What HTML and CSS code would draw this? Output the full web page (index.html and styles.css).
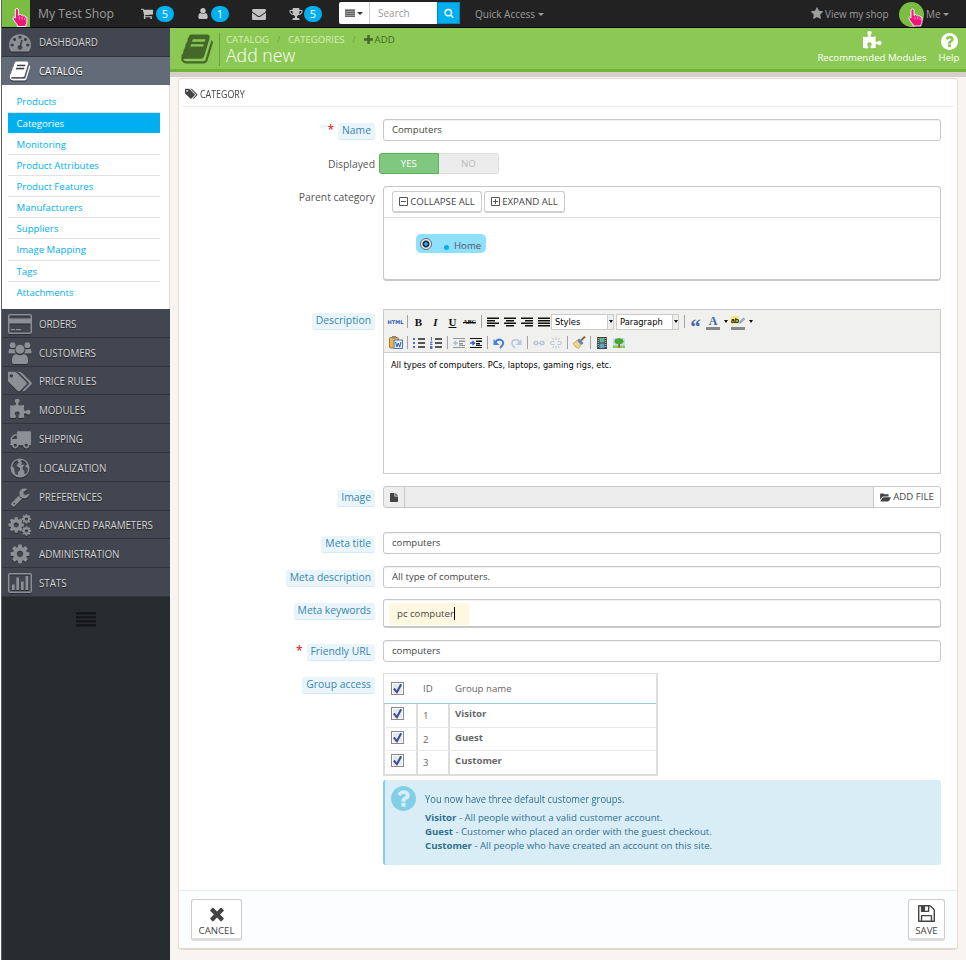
FILE: index.html
```html
<!DOCTYPE html>
<html lang="en">
<head>
<meta charset="utf-8">
<title>My Test Shop - Add new category</title>
<link rel="stylesheet" href="styles.css">
</head>
<body>
<svg class="sprite" aria-hidden="true">
  <symbol id="hand" viewBox="0 0 16 18"><path d="M4 2q0-1.500 1.500-1.500T7 2v5l1-.8q1-.4 1.600.7q1.200-.8 2 .5q1.400-.5 2 .8q1.400 0 1.400 1.600V13q0 2-1 3v1.500H6V16q-2-2-4-5.500-.8-1.500.6-2l1.400 1z" fill="#f0147c" stroke="#fff" stroke-width=".9"/><path d="M8 8v3M10.500 8v3M13 9v2.500" stroke="#ffc0dc" stroke-width=".7"/></symbol>
  <symbol id="cart" viewBox="0 0 1792 1792"><path d="M704 1536q0 52-38 90t-90 38-90-38-38-90 38-90 90-38 90 38 38 90zm896 0q0 52-38 90t-90 38-90-38-38-90 38-90 90-38 90 38 38 90zm128-1088v512q0 24-16.500 42.500t-40.500 21.500l-1044 122q13 60 13 70 0 16-24 64h920q26 0 45 19t19 45-19 45-45 19h-1024q-26 0-45-19t-19-45q0-11 8-31.500t16-36 21.500-40 15.500-29.500l-177-823h-204q-26 0-45-19t-19-45 19-45 45-19h256q16 0 28.500 6.500t19.500 15.500 13 24.500 8 26 5.500 29.500 4.500 26h1201q26 0 45 19t19 45z"/></symbol>
  <symbol id="user" viewBox="0 0 1792 1792"><path d="M1536 1399q0 109-62.500 187t-150.500 78h-854q-88 0-150.500-78t-62.500-187q0-85 8.500-160.500t31.500-152 58.500-131 94-89 134.500-34.500q131 128 313 128t313-128q76 0 134.500 34.500t94 89 58.500 131 31.500 152 8.500 160.500zm-256-887q0 159-112.500 271.500t-271.500 112.500-271.500-112.500-112.500-271.500 112.500-271.500 271.500-112.500 271.500 112.500 112.500 271.500z"/></symbol>
  <symbol id="envelope" viewBox="0 0 1792 1792"><path d="M1792 710v794q0 66-47 113t-113 47h-1472q-66 0-113-47t-47-113v-794q44 49 101 87 362 246 497 345 57 42 92.500 65.500t94.500 48 110 24.500h2q51 0 110-24.500t94.500-48 92.500-65.500q170-123 498-345 57-39 100-87zm0-294q0 79-49 151t-122 123q-376 261-468 325-10 7-42.500 30.500t-54 38-52 32.500-57.500 27-50 9h-2q-23 0-50-9t-57.500-27-52-32.500-54-38-42.500-30.500q-91-64-262-182.500t-205-142.500q-62-42-117-115.500t-55-136.500q0-78 41.500-130t118.500-52h1472q65 0 112.500 47t47.500 113z"/></symbol>
  <symbol id="trophy" viewBox="0 0 1792 1792"><path d="M522 883q-74-162-74-371h-256v96q0 78 94.500 162t235.500 113zm1078-275v-96h-256q0 209-74 371 141-29 235.500-113t94.500-162zm128-128v128q0 71-41.500 143t-112 130-173 97.500-215.500 44.500q-42 54-95 95-38 34-52.500 72.500t-14.500 89.500q0 54 30.500 91t97.500 37q75 0 133.500 45.500t58.500 114.500v64q0 14-9 23t-23 9h-832q-14 0-23-9t-9-23v-64q0-69 58.500-114.500t133.500-45.500q67 0 97.500-37t30.500-91q0-51-14.500-89.500t-52.500-72.500q-53-41-95-95-113-5-215.500-44.500t-173-97.500-112-130-41.500-143v-128q0-40 28-68t68-28h288v-96q0-66 47-113t113-47h576q66 0 113 47t47 113v96h288q40 0 68 28t28 68z"/></symbol>
  <symbol id="search" viewBox="0 0 1792 1792"><path d="M1216 832q0-185-131.500-316.500t-316.500-131.500-316.500 131.500-131.500 316.500 131.500 316.500 316.500 131.500 316.500-131.500 131.500-316.500zm512 832q0 52-38 90t-90 38q-54 0-90-38l-343-342q-179 124-399 124-143 0-273.500-55.500t-225-150-150-225-55.500-273.500 55.500-273.500 150-225 225-150 273.500-55.500 273.500 55.500 225 150 150 225 55.500 273.500q0 220-124 399l343 343q37 37 37 90z"/></symbol>
  <symbol id="star" viewBox="0 0 1792 1792"><path d="M1728 647q0 22-26 48l-363 354 86 500q1 7 1 20 0 21-10.500 35.500t-30.500 14.500q-19 0-40-12l-449-236-449 236q-22 12-40 12-21 0-31.500-14.500t-10.500-35.500q0-6 2-20l86-500-364-354q-25-27-25-48 0-37 56-46l502-73 225-455q19-41 49-41t49 41l225 455 502 73q56 9 56 46z"/></symbol>
  <symbol id="gauge" viewBox="0 0 1792 1792"><path d="M384 1152q0-53-37.500-90.500t-90.500-37.500-90.500 37.500-37.500 90.500 37.500 90.500 90.500 37.500 90.500-37.500 37.500-90.500zm192-448q0-53-37.500-90.500t-90.500-37.500-90.500 37.500-37.500 90.500 37.500 90.500 90.500 37.500 90.500-37.500 37.500-90.500zm428 481l101-382q6-26-7.500-48.500t-38.500-29.500-48 6.500-30 39.500l-101 382q-60 5-107 43.500t-63 98.500q-20 77 20 146t117 89 146-20 89-117q16-60-6-117t-72-91zm660-33q0-53-37.500-90.500t-90.500-37.500-90.500 37.500-37.500 90.500 37.500 90.500 90.500 37.500 90.500-37.500 37.500-90.500zm-640-640q0-53-37.500-90.500t-90.500-37.500-90.500 37.500-37.500 90.500 37.500 90.500 90.500 37.500 90.500-37.500 37.500-90.500zm448 192q0-53-37.500-90.500t-90.500-37.500-90.500 37.500-37.500 90.500 37.500 90.500 90.500 37.500 90.500-37.500 37.500-90.500zm320 448q0 261-141 483-19 29-54 29h-1402q-35 0-54-29-141-221-141-483 0-182 71-348t191-286 286-191 348-71 348 71 286 191 191 286 71 348z"/></symbol>
  <symbol id="book" viewBox="0 0 1792 1792"><path d="M1703 478q40 57 18 129l-275 906q-19 64-76.500 107.500t-122.500 43.500h-923q-77 0-148.500-53.500t-99.500-131.500q-24-67-2-127 0-4 3-27t4-37q1-8-3-21.500t-3-19.500q2-11 8-21t16.500-23.500 16.500-23.500q23-38 45-91.500t30-91.500q3-10 .5-30t-.5-28q3-11 17-28t17-23q21-36 42-92t25-90q1-9-2.500-32t.5-28q4-13 22-30.500t22-22.500q19-26 42.500-84.500t27.500-96.500q1-8-3-25.500t-2-26.500q2-8 9-18t18-23 17-21q8-12 16.500-30.500t15-35 16-36 19.500-32 26.500-23.500 36-11.500 47.500 5.500l-1 3q38-9 51-9h761q74 0 114 56t18 130l-274 906q-36 119-71.500 153.500t-128.500 34.500h-869q-27 0-38 15-11 16-1 43 24 70 144 70h923q29 0 56-15.500t35-41.500l300-987q7-22 5-57 38 15 59 43zm-1064 2q-4 13 2 22.500t20 9.500h608q13 0 25.500-9.500t16.500-22.500l21-64q4-13-2-22.500t-20-9.500h-608q-13 0-25.500 9.500t-16.500 22.500zm-83 256q-4 13 2 22.500t20 9.500h608q13 0 25.500-9.500t16.500-22.500l21-64q4-13-2-22.500t-20-9.500h-608q-13 0-25.500 9.500t-16.500 22.500z"/></symbol>
  <symbol id="card" viewBox="0 0 24 20"><path fill-rule="evenodd" d="M2 0h20q2 0 2 2v16q0 2-2 2H2q-2 0-2-2V2Q0 0 2 0zM1.500 2v2.500h21V2q0-.5-.5-.5H2q-.5 0-.5.500zm0 7.500V18q0 .5.500.5h20q.5 0 .5-.5V9.500zM3 15h4v1.500H3zm5 0h5v1.500H8z"/></symbol>
  <symbol id="users" viewBox="0 0 24 23"><circle cx="4.300" cy="3.300" r="3.100"/><circle cx="19.700" cy="3.300" r="3.100"/><path d="M0 12V9.500Q0 7 2.500 7q2 1 4 .3Q6 10 7.500 12zm24 0V9.500Q24 7 21.500 7q-2 1-4 .3.500 2.700-1 4.700z"/><circle cx="12" cy="7.700" r="4.700"/><path d="M3.500 20q0-7 4.500-7.500 4 2.500 8 0 4.500.5 4.500 7.500 0 3-3 3h-11q-3 0-3-3z"/></symbol>
  <symbol id="tags" viewBox="0 0 1850 1664"><path d="M384 448q0-53-37.500-90.500t-90.500-37.500-90.500 37.500-37.500 90.500 37.500 90.500 90.500 37.500 90.500-37.500 37.500-90.500zm1067 576q0 53-37 90l-491 492q-39 37-91 37-53 0-90-37l-715-716q-38-37-64.500-101t-26.500-117v-416q0-52 38-90t90-38h416q53 0 117 26.500t102 64.500l715 714q37 39 37 91zm384 0q0 53-37 90l-491 492q-39 37-91 37-36 0-59-14t-53-45l470-470q37-37 37-90 0-52-37-91l-715-714q-38-38-102-64.500t-117-26.500h224q53 0 117 26.500t102 64.500l715 714q37 39 37 91z"/></symbol>
  <symbol id="puzzle" viewBox="0 0 1792 1792"><path d="M1755 1083q0 81-44.500 135t-123.500 54q-41 0-77.500-17.500t-59-38-56.500-38-71-17.500q-110 0-110 124 0 39 16 115t15 115v5q-22 0-33 1-34 3-97.500 11.500t-115.500 13.500-98 5q-61 0-103-26.500t-42-83.500q0-37 17.500-71t38-56.500 38-59 17.500-77.500q0-79-54-123.500t-135-44.500q-84 0-143 45.500t-59 127.500q0 43 15 83t33.500 64.500 33.500 53 15 50.500q0 45-46 89-37 35-117 35-95 0-245-24-9-2-27.500-4t-27.500-4l-13-2q-1 0-3-1-2 0-2-1v-1024q2 1 17.500 3.500t34 5 21.500 3.500q150 24 245 24 80 0 117-35 46-44 46-89 0-22-15-50.500t-33.500-53-33.500-64.500-15-83q0-82 59-127.500t144-45.500q80 0 134 44.500t54 123.500q0 41-17.500 77.500t-38 59-38 56.500-17.500 71q0 57 42 83.500t103 26.500q64 0 180-15t163-17v2q-1 2-3.500 17.500t-5 34-3.500 21.500q-24 150-24 245 0 80 35 117 44 46 89 46 22 0 50.500-15t53-33.500 64.500-33.500 83-15q82 0 127.500 59t45.500 143z"/></symbol>
  <symbol id="truck" viewBox="0 0 1792 1792"><path d="M640 1408q0-52-38-90t-90-38-90 38-38 90 38 90 90 38 90-38 38-90zm-384-512h384v-256h-158q-13 0-22 9l-195 195q-9 9-9 22v30zm1280 512q0-52-38-90t-90-38-90 38-38 90 38 90 90 38 90-38 38-90zm256-1088v1024q0 15-4 26.500t-13.500 18.500-16.500 11.500-23.500 6-22.500 2-25.500 0-22.500-.5q0 106-75 181t-181 75-181-75-75-181h-384q0 106-75 181t-181 75-181-75-75-181h-64q-3 0-22.500.5t-25.500 0-22.500-2-23.500-6-16.500-11.500-13.500-18.500-4-26.500q0-26 19-45t45-19v-320q0-8-.5-35t0-38 2.500-34.500 6.500-37 14-30.500 22.500-30l198-198q19-19 50.500-32t58.500-13h160v-192q0-26 19-45t45-19h1024q26 0 45 19t19 45z"/></symbol>
  <symbol id="globe" viewBox="0 0 20 20"><path fill-rule="evenodd" d="M10 .5a9.500 9.500 0 1 0 0 19 9.500 9.500 0 0 0 0-19zM12 2l3 1.500 2.200 3-1 .3-1 2.200 1.800.5.900 1.500-.6 3.200-2 2-1-.6V13l-1.600-1.500.2-2.500 1.400-1.500-1.300-1-1.500.5.500-2.500-1-1zM4 4.200l2-1.500 2-.5-.5 1.300L9 4.300 7.500 6l-.8 2.200 1.500.8 2 1.500-.5 1.800-1.800 2-.2 2.800-2-.7L4.500 13 4 10 2.200 8z"/></symbol>
  <symbol id="wrench" viewBox="0 0 1792 1792"><path d="M448 1472q0-26-19-45t-45-19-45 19-19 45 19 45 45 19 45-19 19-45zm644-420l-682 682q-37 37-90 37-52 0-91-37l-106-108q-38-36-38-90 0-53 38-91l681-681q39 98 114.500 173.500t173.500 114.500zm634-435q0 39-23 106-47 134-164.500 217.500t-258.500 83.500q-185 0-316.500-131.500t-131.500-316.500 131.500-316.500 316.500-131.500q58 0 121.500 16.500t107.500 46.500q16 11 16 28t-16 28l-293 169v224l193 107q5-3 79-48.500t135.500-81 70.500-35.500q15 0 23.500 10t8.500 25z"/></symbol>
  <symbol id="cog" viewBox="0 0 1792 1792"><path d="M1152 896q0-106-75-181t-181-75-181 75-75 181 75 181 181 75 181-75 75-181zm512-109v222q0 12-8 23t-20 13l-185 28q-19 54-39 91 35 50 107 138 10 12 10 25t-9 23q-27 37-99 108t-94 71q-12 0-26-9l-138-108q-44 23-91 38-16 136-29 186-7 28-36 28h-222q-14 0-24.500-8.500t-11.500-21.500l-28-184q-49-16-90-37l-141 107q-10 9-25 9-14 0-25-11-126-114-165-168-7-10-7-23 0-12 8-23 15-21 51-66.500t54-70.500q-27-50-41-99l-183-27q-13-2-21-12.500t-8-23.500v-222q0-12 8-23t19-13l186-28q14-46 39-92-40-57-107-138-10-12-10-24 0-10 9-23 26-36 98.500-107.500t94.500-71.500q13 0 26 10l138 107q44-23 91-38 16-136 29-186 7-28 36-28h222q14 0 24.500 8.500t11.500 21.500l28 184q49 16 90 37l142-107q9-9 24-9 13 0 25 10 129 119 165 170 7 8 7 22 0 12-8 23-15 21-51 66.500t-54 70.500q26 50 41 98l183 28q13 2 21 12.500t8 23.500z"/></symbol>
  <symbol id="cogs" viewBox="0 0 24 23"><use href="#cog" x="-1.500" y="2" width="19" height="19"/><use href="#cog" x="13" y="-.5" width="11.500" height="11.500"/><use href="#cog" x="13" y="12" width="11.500" height="11.500"/></symbol>
  <symbol id="stats" viewBox="0 0 24 20"><path fill-rule="evenodd" d="M2 0h20q2 0 2 2v16q0 2-2 2H2q-2 0-2-2V2Q0 0 2 0zm-.5 2v16q0 .5.500.5h20q.5 0 .5-.5V2q0-.5-.5-.5H2q-.5 0-.5.500zM4 11.500h2.700V17H4zm4.300-7H11V17H8.300zm4.700 4h2.700V17H13zm4.500-5.500h2.700v14h-2.700z"/></symbol>
  <symbol id="bars" viewBox="0 0 20 16"><path d="M0 1h20v2.500H0zm0 4h20v2.500H0zm0 4h20v2.500H0zm0 4h20v2.500H0z"/></symbol>
  <symbol id="help" viewBox="128 128 1536 1536"><path d="M1024 1376v-192q0-14-9-23t-23-9h-192q-14 0-23 9t-9 23v192q0 14 9 23t23 9h192q14 0 23-9t9-23zm256-672q0-88-55.500-163t-138.500-116-170-41q-243 0-371 213-15 24 8 42l132 100q7 6 19 6 16 0 25-12 53-68 86-92 34-24 86-24 48 0 85.500 26t37.500 59q0 38-20 61t-68 45q-63 28-115.500 86.500t-52.500 125.500v36q0 14 9 23t23 9h192q14 0 23-9t9-23q0-19 21.500-49.500t54.500-49.500q32-18 49-28.500t46-35 44.500-48 28-60.500 12.500-81zm384 192q0 209-103 385.500t-279.500 279.500-385.500 103-385.500-103-279.500-279.500-103-385.500 103-385.500 279.500-279.500 385.500-103 385.500 103 279.500 279.500 103 385.500z"/></symbol>
  <symbol id="floppy" viewBox="128 128 1536 1536"><path d="M512 1536h768v-384h-768v384zm896 0h128v-896q0-14-10-38.500t-20-34.500l-281-281q-10-10-34-20t-39-10v416q0 40-28 68t-68 28h-576q-40 0-68-28t-28-68v-416h-128v1280h128v-416q0-40 28-68t68-28h832q40 0 68 28t28 68v416zm-384-928v-320q0-13-9.500-22.500t-22.500-9.500h-192q-13 0-22.500 9.500t-9.500 22.500v320q0 13 9.500 22.500t22.500 9.500h192q13 0 22.500-9.500t9.500-22.500zm640 32v928q0 40-28 68t-68 28h-1344q-40 0-68-28t-28-68v-1344q0-40 28-68t68-28h928q40 0 88 20t76 48l280 280q28 28 48 76t20 88z"/></symbol>
  <symbol id="times" viewBox="302 366 1188 1324"><path transform="translate(0 68)" d="M1490 1322q0 40-28 68l-136 136q-28 28-68 28t-68-28l-294-294-294 294q-28 28-68 28t-68-28l-136-136q-28-28-28-68t28-68l294-294-294-294q-28-28-28-68t28-68l136-136q28-28 68-28t68 28l294 294 294-294q28-28 68-28t68 28l136 136q28 28 28 68t-28 68l-294 294 294 294q28 28 28 68z"/></symbol>
  <symbol id="align-left" viewBox="0 0 12 10"><path d="M0 .5h12V2H0zm0 2.500h8v1.500H0zm0 2.500h12V7H0zM0 8h8v1.500H0z"/></symbol>
  <symbol id="align-center" viewBox="0 0 12 10"><path d="M0 .5h12V2H0zm2 2.500h8v1.500H2zm-2 2.500h12V7H0zM2 8h8v1.500H2z"/></symbol>
  <symbol id="align-right" viewBox="0 0 12 10"><path d="M0 .5h12V2H0zm4 2.500h8v1.500H4zm-4 2.500h12V7H0zM4 8h8v1.500H4z"/></symbol>
  <symbol id="align-full" viewBox="0 0 12 10"><path d="M0 .5h12V2H0zm0 2.500h12v1.500H0zm0 2.500h12V7H0zM0 8h12v1.500H0z"/></symbol>
  <symbol id="indent" viewBox="0 0 12 12"><path d="M0 1h12v1H0zm6 2.500h6V5H6zm0 2.500h4v1.500H6zm0 2h6v1H6zM0 10h12v1H0z"/></symbol>
  <symbol id="chain" viewBox="0 0 12 6"><path fill="none" stroke-width="1.500" d="M5 1.500H2.500a1.500 1.500 0 0 0 0 3H5M7 1.500h2.500a1.500 1.500 0 0 1 0 3H7M4 3h4"/></symbol>
</svg>

<div class="frame">
<header class="topbar">
  <div class="logo"><svg class="hand"><use href="#hand"/></svg></div>
  <a class="shop">My Test Shop</a>
  <a class="notif n-cart"><svg class="i13"><use href="#cart"/></svg><b>5</b></a>
  <a class="notif n-user"><svg class="i13"><use href="#user"/></svg><b>1</b></a>
  <a class="notif n-mail"><svg class="i14"><use href="#envelope"/></svg></a>
  <a class="notif n-trophy"><svg class="i14"><use href="#trophy"/></svg><b>5</b></a>
  <div class="search">
    <span class="search-type"><svg><use href="#bars"/></svg><i class="caret"></i></span>
    <span class="search-input">Search</span>
    <span class="search-go"><svg><use href="#search"/></svg></span>
  </div>
  <a class="quick">Quick Access <i class="caret"></i></a>
  <a class="view"><svg class="i14"><use href="#star"/></svg><span>View my shop</span></a>
  <span class="avatar"><svg class="hand"><use href="#hand"/></svg></span>
  <a class="me">Me <i class="caret"></i></a>
</header>

<div class="columns">
<nav class="sidebar">
  <a class="item"><svg><use href="#gauge"/></svg>DASHBOARD</a>
  <a class="item active"><svg><use href="#book"/></svg>CATALOG</a>
  <div class="submenu">
    <a>Products</a><a class="current">Categories</a><a>Monitoring</a><a>Product Attributes</a><a>Product Features</a><a>Manufacturers</a><a>Suppliers</a><a>Image Mapping</a><a>Tags</a><a>Attachments</a>
  </div>
  <a class="item"><svg><use href="#card"/></svg>ORDERS</a>
  <a class="item"><svg><use href="#users"/></svg>CUSTOMERS</a>
  <a class="item"><svg><use href="#tags"/></svg>PRICE RULES</a>
  <a class="item"><svg><use href="#puzzle"/></svg>MODULES</a>
  <a class="item"><svg><use href="#truck"/></svg>SHIPPING</a>
  <a class="item"><svg class="small"><use href="#globe"/></svg>LOCALIZATION</a>
  <a class="item"><svg class="small"><use href="#wrench"/></svg>PREFERENCES</a>
  <a class="item"><svg><use href="#cogs"/></svg>ADVANCED PARAMETERS</a>
  <a class="item"><svg><use href="#cog"/></svg>ADMINISTRATION</a>
  <a class="item"><svg><use href="#stats"/></svg>STATS</a>
  <svg class="collapse"><use href="#bars"/></svg>
</nav>

<main>
  <div class="pagehead">
    <svg class="headicon"><use href="#book"/></svg>
    <div class="titles">
      <div class="crumbs"><span>CATALOG</span><i>/</i><span>CATEGORIES</span><i>/</i><em><svg viewBox="0 0 9 9"><path d="M3.300 0h2.400v3.300H9v2.400H5.700V9H3.300V5.700H0V3.300h3.300z"/></svg>ADD</em></div>
      <h1>Add new</h1>
    </div>
    <a class="tool t-mod"><svg><use href="#puzzle"/></svg>Recommended Modules</a>
    <a class="tool t-help"><svg><use href="#help"/></svg>Help</a>
  </div>

  <section class="panel">
    <h2><svg><use href="#tags"/></svg><span>CATEGORY</span></h2>
    <div class="form">
      <div class="row r-name"><div class="lab"><sup>*</sup><label class="hint">Name</label></div><div class="input">Computers</div></div>
      <div class="row r-disp"><div class="lab"><label>Displayed</label></div><div class="switch"><b>YES</b><span>NO</span></div></div>
      <div class="row r-parent"><div class="lab"><label>Parent category</label></div>
        <div class="tree">
          <div class="treebar"><a class="btn b-col"><svg viewBox="0 0 9 9"><path d="M.5.5h8v8h-8zM2 4.500h5"/></svg>COLLAPSE ALL</a><a class="btn b-exp"><svg viewBox="0 0 9 9"><path d="M.5.5h8v8h-8zM2 4.500h5M4.500 2v5"/></svg>EXPAND ALL</a></div>
          <div class="node"><i class="radio"></i><i class="dot"></i>Home</div>
        </div></div>
      <div class="row r-desc"><div class="lab"><label class="hint">Description</label></div>
        <div class="editor">
          <div class="tools">
            <div class="line">
              <span class="c html">HTML</span><i class="sep"></i>
              <span class="c serif">B</span><span class="c serif ital">I</span><span class="c serif und">U</span><span class="c abc">ABC</span><i class="sep"></i>
              <span class="c"><svg class="al"><use href="#align-left"/></svg></span><span class="c"><svg class="al"><use href="#align-center"/></svg></span><span class="c"><svg class="al"><use href="#align-right"/></svg></span><span class="c"><svg class="al"><use href="#align-full"/></svg></span>
              <span class="sel first">Styles<i><u></u></i></span><span class="sel">Paragraph<i><u></u></i></span><i class="sep wide"></i>
              <span class="c quote">“</span><span class="c color">A</span><u class="dd"></u><span class="c back">ab<svg viewBox="0 0 8 9"><path d="M1 8l1-3 4-4 1.500 1.500-4 4z" fill="#b9c6e2" stroke="#46618f" stroke-width=".8"/></svg></span><u class="dd"></u>
            </div>
            <div class="line">
              <span class="c"><svg class="ic big-ic" viewBox="0 0 14 13"><rect x=".5" y="1.500" width="9" height="10.500" rx="1" fill="#e8b64c" stroke="#a87622"/><rect x="3" y="0" width="4" height="2.500" fill="#888"/><path d="M5 4h8.500v8.500H5z" fill="#e6effb" stroke="#4a75b8"/><path d="M6.500 6l1.300 5L9.300 7l1.400 4L12 6" fill="none" stroke="#2856a8"/></svg></span><i class="sep"></i>
              <span class="c"><svg class="ic" viewBox="0 0 12 12"><path d="M5 2h7M5 6h7M5 10h7" stroke="#222" stroke-width="1.300"/><path d="M0 1h2v2H0zm0 4h2v2H0zm0 4h2v2H0z" fill="#4b72c8"/></svg></span>
              <span class="c"><svg class="ic" viewBox="0 0 12 12"><path d="M5 2h7M5 6h7M5 10h7" stroke="#222" stroke-width="1.300"/><path d="M1 0h1v3.500H1zM0 4.500h2.500v1L1 7h1.500v1H0V7l1.500-1.500H0zM0 9h2.500v3H0v-1h1.500H0v-1h1.500H0z" fill="#4b72c8"/></svg></span><i class="sep"></i>
              <span class="c"><svg class="ic dim" viewBox="0 0 12 12"><use href="#indent"/><path d="M5 6H1m2-2L1 6l2 2" stroke="#4b72c8" fill="none" stroke-width="1.300"/></svg></span>
              <span class="c"><svg class="ic" viewBox="0 0 12 12"><use href="#indent"/><path d="M0 6h4M2.500 4l2 2-2 2" stroke="#2c5ac4" fill="none" stroke-width="1.300"/></svg></span><i class="sep"></i>
              <span class="c"><svg class="ic" viewBox="0 0 12 12"><path d="M2 5.500Q5 1 9 3.500q3 3-2 7.500" fill="none" stroke="#4b7fd8" stroke-width="2"/><path d="M.5 2v6h6z" fill="#4b7fd8"/></svg></span>
              <span class="c"><svg class="ic dim" viewBox="0 0 12 12"><path d="M10 5.500Q7 1 3 3.500q-3 3 2 7.500" fill="none" stroke="#6c94c8" stroke-width="1.800"/><path d="M11.500 2v6h-6z" fill="#6c94c8"/></svg></span><i class="sep"></i>
              <span class="c"><svg class="ic dim" viewBox="0 -3 12 12" stroke="#6c84b0"><use href="#chain" width="12" height="6"/></svg></span>
              <span class="c"><svg class="ic dim" viewBox="0 0 12 12" stroke="#6c84b0"><path d="M4.500 4.500H2a1.500 1.500 0 0 0 0 3h2.500m3-3H10a1.500 1.500 0 0 1 0 3H7.500M4 3L2.500 1M6 3V0m2 3l1.500-2M4 9l-1.500 2M6 9v3m2-3l1.500 2" fill="none"/></svg></span><i class="sep"></i>
              <span class="c"><svg class="ic big-ic" viewBox="0 0 13 13"><path d="M12.500.5l-4 4" stroke="#8a6a3c" stroke-width="2"/><path d="M6.500 2.500l4.500 4.500-2 2-4.500-4.500z" fill="#5d7fc4"/><path d="M4.500 4.500L8.500 9 6 12.500Q3 12 .5 7.500z" fill="#efd78a" stroke="#b99b46" stroke-width=".7"/></svg></span><i class="sep"></i>
              <span class="c"><svg class="ic" viewBox="0 0 12 12"><path d="M1 0h10v12H1z" fill="#444"/><path d="M3.500 1h5v4.500h-5z" fill="#5fb98a"/><path d="M3.500 6.500h5V11h-5z" fill="#58a6c8"/><path d="M2.200 1v10M9.800 1v10" stroke="#ddd" stroke-dasharray="1 1"/></svg></span>
              <span class="c"><svg class="ic" viewBox="0 0 12 12"><path d="M0 1h12v10H0z" fill="#bfe2fa"/><path d="M0 8.500h12V11H0z" fill="#8ccb4e"/><path d="M5.300 6h1.600v4.500H5.300z" fill="#8a5a24"/><ellipse cx="6" cy="4.300" rx="4.500" ry="3" fill="#4ea52c"/></svg></span>
            </div>
          </div>
          <p>All types of computers. PCs, laptops, gaming rigs, etc.</p>
        </div></div>
      <div class="row r-image"><div class="lab"><label class="hint">Image</label></div>
        <div class="file"><span class="file-ic"><svg viewBox="0 0 9 10"><path d="M.5 0H5v4h4v5.500q0 .5-.5.500h-8Q0 10 0 9.500v-9Q0 0 .5 0zM6 0l3 3H6z"/></svg></span><span class="file-name"></span><span class="file-btn"><svg viewBox="0 0 12 10"><path d="M0 7.500V1.500Q0 .5 1 .5h2.500q1 0 1 1H8.500q1 0 1 1V4H4Q2.500 4 1.700 5.300zM4 4.800h7.500q.8 0 .3.800L10 8.700q-.5.800-1.500.8H.9q-.8 0-.3-.8L2.500 5.600Q3 4.800 4 4.800z"/></svg>ADD FILE</span></div></div>
      <div class="row r-mt"><div class="lab"><label class="hint">Meta title</label></div><div class="input">computers</div></div>
      <div class="row r-md"><div class="lab"><label class="hint">Meta description</label></div><div class="input">All type of computers.</div></div>
      <div class="row r-mk"><div class="lab"><label class="hint">Meta keywords</label></div><div class="input keywords"><span>pc computer<i></i></span></div></div>
      <div class="row r-url"><div class="lab"><sup>*</sup><label class="hint">Friendly URL</label></div><div class="input">computers</div></div>
      <div class="row r-group"><div class="lab"><label class="hint">Group access</label></div>
        <div class="groups">
          <div class="g head"><span><i class="check"><svg viewBox="0 0 9 9"><path d="M1.500 4.500L4 7.500 7.500 1"/></svg></i></span><span>ID</span><span>Group name</span></div>
          <div class="g"><span><i class="check"><svg viewBox="0 0 9 9"><path d="M1.500 4.500L4 7.500 7.500 1"/></svg></i></span><span class="id">1</span><b>Visitor</b></div>
          <div class="g"><span><i class="check"><svg viewBox="0 0 9 9"><path d="M1.500 4.500L4 7.500 7.500 1"/></svg></i></span><span class="id">2</span><b>Guest</b></div>
          <div class="g"><span><i class="check"><svg viewBox="0 0 9 9"><path d="M1.500 4.500L4 7.500 7.500 1"/></svg></i></span><span class="id">3</span><b>Customer</b></div>
        </div></div>
      <div class="alert"><svg><use href="#help"/></svg><div>
        <h4>You now have three default customer groups.</h4>
        <p><b>Visitor</b> - All people without a valid customer account.</p>
        <p><b>Guest</b> - Customer who placed an order with the guest checkout.</p>
        <p><b>Customer</b> - All people who have created an account on this site.</p></div></div>
    </div>
    <footer>
      <a class="big cancel"><svg><use href="#times"/></svg><span>CANCEL</span></a>
      <a class="big save"><svg><use href="#floppy"/></svg><span>SAVE</span></a>
    </footer>
  </section>
</main>
</div>
</div>
</body>
</html>
```
FILE: styles.css
```css
* { box-sizing: border-box; }
body { margin: 0; background: #fff; font: 9.650px/14px "Open Sans", sans-serif; color: #555; }
svg { display: block; fill: currentColor; flex: none; }
.sprite { position: absolute; width: 0; height: 0; }
i, em { font-style: normal; }
h1, h2, h4, p { margin: 0; font-weight: normal; }
.frame { margin-left: 1px; border-left: 1px solid #5c5f66; height: 960px; overflow: hidden; display: flex; flex-direction: column; }

/* top bar */
.topbar { height: 28px; flex: none; background: #222; border-bottom: 1px solid #0a0a0a; display: flex; align-items: center; color: #9d9d9d; white-space: nowrap; font-size: 10px; }
.logo { width: 28px; height: 27px; background: #7bbd42; padding: 8px 0 0 9px; }
.hand { width: 17px; height: 19px; }
.shop { width: 104px; padding-left: 8px; font-size: 12.200px; }
.notif { display: flex; align-items: center; gap: 1px; color: #c3c3c3; }
.notif b { width: 18px; height: 16px; border-radius: 8px; background: #00aff0; color: #fff; font-size: 11px; line-height: 16px; font-weight: normal; text-align: center; }
.i13 { width: 14px; height: 13px; }
.i14 { width: 14px; height: 14px; }
.n-cart { width: 54px; padding-left: 6px; gap: 2px; }
.n-user { width: 62px; padding-left: 8px; }
.n-mail { width: 39px; padding-left: 2px; }
.n-trophy { width: 50px; }
.search { width: 121px; height: 22px; display: flex; background: #fff; border-radius: 2px; overflow: hidden; margin-bottom: 1px; }
.search-type { width: 31px; border-right: 1px solid #ccc; display: flex; align-items: center; justify-content: center; gap: 2px; color: #333; }
.search-type svg { width: 10px; height: 10px; }
.search-type .caret { border-top-color: #333; }
.search-input { width: 67px; padding: 4px 8px; color: #999; }
.search-go { flex: 1; background: #00aff0; border: 1px solid #008abd; color: #fff; display: grid; place-items: center; }
.search-go svg { width: 10px; height: 10px; }
.caret { display: inline-block; border: 3px solid transparent; border-top-color: #9d9d9d; border-bottom: 0; vertical-align: 2px; }
.quick { width: 350px; padding-left: 15px; }
.view { display: flex; align-items: center; width: 89px; font-size: 9.900px; gap: 1px; }
.view svg { width: 14px; height: 13px; }
.avatar { width: 25px; height: 25px; border-radius: 50%; background: #7bbd42; padding: 6px 0 0 8px; margin-top: 2px; }
.avatar .hand { width: 16px; }
.me { padding-left: 2px; }

.columns { flex: 1; display: flex; min-height: 0; }
/* side navigation */
.sidebar { width: 168px; background: #282b30; flex: none; }
.item { display: flex; align-items: center; height: 28.800px; padding-left: 37px; background: #414650; border-bottom: 1px solid #30343b; color: #d3d4d6; font-size: 9.900px; letter-spacing: -.1px; text-shadow: 0 1px 1px #222; }
.item svg { width: 24px; height: 22px; margin: 0 7px 0 -31px; color: #8c8f95; filter: drop-shadow(0 1px 0 #2a2d33); }
.item svg.small { height: 20px; }
.item.active { background: #636a78; color: #fff; height: 28.200px; border: 0; }
.item.active svg { color: #fff; }
.submenu ~ .item { padding-top: 2px; }
.submenu { background: #fff; height: 224px; padding: 6.500px 9px 0 6px; border-right: 1px solid #eadccb; }
.submenu a { display: block; height: 21.150px; padding: 4px 0 0 8.500px; border-bottom: 1px solid #e2e2e2; color: #00aff0; }
.submenu a:last-child { border: 0; }
.submenu .current { background: #00aff0; color: #fff; border-color: #fff; }
.collapse { width: 20px; height: 16px; margin: 14px 0 0 74px; color: #15171a; }

/* page heading */
main { flex: 1; background: #f8f4ef; min-width: 0; }
.pagehead { height: 44px; background: #8cc954; border-bottom: 3px solid #72b236; box-shadow: 0 5px 0 #d5d0ca; display: flex; color: #fff; white-space: nowrap; }
.headicon { width: 34px; height: 36px; margin: 3px 5px 0 10px; color: #43682a; }
.titles { margin-top: 5px; height: 33px; border-left: 1px solid #6b9f3c; padding-left: 6px; width: 591px; }
.crumbs { display: flex; line-height: 13px; color: #d5edbd; }
.crumbs i { width: 19px; text-align: center; color: #6f9f45; }
.crumbs em { color: #43682a; display: flex; gap: 2px; align-items: center; }
.crumbs svg { width: 9px; height: 9px; }
h1 { font-size: 17.700px; line-height: 19px; font-weight: 300; }
.tool { display: flex; flex-direction: column; align-items: center; padding-top: 3px; width: 124px; }
.t-help { width: 30px; }
.tool svg { width: 20px; height: 20px; }
.t-help svg { width: 17px; height: 17px; margin: 2px 0 1px; }

/* panel */
.panel { margin: 6px 8px 0; height: 872px; background: #fff; border: 1px solid #eadccb; border-bottom: 2px solid #e0d8cf; border-radius: 4px; overflow: hidden; }
h2 { display: flex; height: 28px; margin: 0 2px; padding: 2px 0 0 4px; align-items: center; border-bottom: 1px solid #eee; color: #444; font-size: 11.500px; }
h2 svg { width: 13px; height: 11px; margin-right: 2px; }
h2 span { transform: scaleX(.77); transform-origin: left; }
.form { height: 783px; padding-top: 12px; }
.row { display: flex; }
.lab { width: 196px; margin-right: 8px; text-align: right; padding-top: 4px; white-space: nowrap; font-size: 10.350px; }
.lab label { display: inline-block; line-height: 15px; }
.lab .hint { background: #eaf5fb; border-bottom: 1px solid #d3e9f3; border-radius: 3px; color: #3586ae; padding: 0 4px; height: 17px; }
.lab sup { color: #e00; font-size: 12px; vertical-align: 0; line-height: 10px; margin-right: 4px; }
.input { width: 558px; height: 22px; border: 1px solid #c7c7c7; border-radius: 3px; padding: 3px 8px; box-shadow: inset 0 1px 1px #f2f2f2; color: #444; }
.r-name { height: 34px; }
.r-disp { height: 33px; }
.r-parent { height: 123px; }
.r-desc { height: 177px; }
.r-image { height: 46px; }
.r-mt { height: 34px; }
.r-md { height: 33px; }
.r-mk { height: 41px; }
.r-url { height: 33px; }
.r-group { height: 107px; }
.switch { display: flex; width: 120px; height: 21px; margin-left: -4px; text-align: center; line-height: 19px; background: #ececec; border: 1px solid #ddd; border-radius: 3px; color: #bbb; }
.switch b, .switch span { width: 60px; }
.switch b { font-weight: normal; margin: -1px 0 -1px -1px; color: #fff; background: #80c780; border: 1px solid #57b457; border-radius: 3px 0 0 3px; }
.tree { width: 558px; height: 95px; border: 1px solid #c7c7c7; border-bottom-width: 2px; border-radius: 4px; }
.treebar { height: 31px; border-bottom: 1px solid #ddd; padding: 4px 8px; display: flex; gap: 2px; }
.btn { height: 22px; border: 1px solid #ccc; border-bottom: 2px solid #d0d0d0; border-radius: 3px; display: flex; align-items: center; justify-content: center; gap: 2px; color: #444; white-space: nowrap; }
.btn svg { width: 9px; height: 9px; fill: none; stroke: #555; }
.b-col { width: 90px; }
.b-exp { width: 81px; }
.node { width: 70px; height: 19px; margin: 16px 0 0 32px; background: #8fdfff; border-radius: 5px; display: flex; align-items: center; padding: 4px 0 0 4px; }
.radio { width: 12px; height: 12px; margin-top: -4px; border-radius: 50%; border: 1px solid #666; background: radial-gradient(circle, #3aa0d8 0 1.500px, #12304e 2px 3px, #eee 4px); }
.dot { width: 5px; height: 5px; border-radius: 50%; background: #00aff0; margin: 3px 5px 0 12px; }

/* rich text editor */
.editor { width: 558px; height: 165px; border: 1px solid #ccc; }
.tools { height: 43px; background: #f0f0ee; border-bottom: 1px solid #ccc; padding: 1px 0 0 3px; }
.line { display: flex; align-items: center; height: 21px; }
.c { width: 17px; display: flex; justify-content: center; align-items: center; height: 18px; color: #111; }
.sep { width: 1px; height: 13px; background: #a5a0a5; margin: 0 2px 0 3px; }
.sep.wide { margin: 0 2px 0 3px; }
.html { font: bold 5px "DejaVu Sans", sans-serif; color: #2d5bb8; }
.serif { font: bold 11px "Liberation Serif", serif; }
.ital { font-style: italic; }
.und { text-decoration: underline; }
.abc { font: bold 6.500px "Liberation Serif", serif; text-decoration: line-through; letter-spacing: -.3px; }
.al { width: 12px; height: 10px; }
.ic { width: 12px; height: 12px; }
.big-ic { width: 14px; height: 13px; }
.dim { opacity: .4; }
.sel { width: 63px; height: 16px; margin-right: 2px; background: #fff; border: 1px solid #ccc; padding-left: 3px; font: 9.300px/14px "DejaVu Sans Condensed", "DejaVu Sans", sans-serif; color: #000; display: flex; justify-content: space-between; }
.sel.first { margin-left: -1px; }
.sel i { width: 6px; background: #eee; border-left: 1px solid #ccc; display: grid; place-items: center; }
.sel u, .dd { border: 2px solid transparent; border-top: 3px solid #111; border-bottom: 0; height: 0; }
.quote { font: bold 21px/30px "Liberation Serif", serif; color: #4669ad; padding-top: 10px; }
.color { font: bold 12px/10px "Liberation Serif", serif; color: #3c60a6; border-bottom: 3px solid #888; width: 14px; height: 15px; margin: 1px 4px 0 2px; }
.back { font: bold 7px/10px "Liberation Sans", sans-serif; background: linear-gradient(#f2ea74, #f2ea74) 0 1px/8px 8px no-repeat; border-bottom: 3px solid #888; width: 14px; height: 15px; margin: 1px 4px 0 3px; }
.back svg { width: 6px; height: 9px; }
.editor p { padding: 6px 7px; font: 9.050px/12px "DejaVu Sans Condensed", "DejaVu Sans", sans-serif; color: #000; }

.file { width: 558px; height: 22px; display: flex; border: 1px solid #c7c7c7; border-radius: 3px; background: #ededed; overflow: hidden; color: #444; }
.file-ic { width: 21px; border-right: 1px solid #c7c7c7; display: grid; place-items: center; }
.file-ic svg { width: 8px; height: 9px; }
.file-name { flex: 1; }
.file-btn { width: 67px; background: #fff; border-left: 1px solid #c7c7c7; display: flex; align-items: center; justify-content: center; gap: 2px; }
.file-btn svg { width: 11px; height: 9px; }
.input.keywords { height: 29px; padding: 3px 5px; border-bottom-width: 2px; }
.keywords span { display: block; width: 80px; height: 22px; padding: 4px 8px; background: #fff8e0; white-space: nowrap; border-radius: 2px; }
.keywords i { display: inline-block; width: 1px; height: 13px; background: #000; vertical-align: -3px; }
.groups { width: 275px; height: 103px; border: 1px solid #ddd; border-width: 1px 2px 2px 1px; color: #666; }
.g { display: grid; grid-template-columns: 32px 32px 1fr; height: 23.500px; border-bottom: 1px solid #e8e8e8; }
.g > * { padding: 3px 5px 0; border-left: 2px solid #ddd; }
.g > :first-child { border-left-width: 1px; padding-left: 6px; }
.g .id { padding-top: 5px; }
.g.head { height: 30px; border-color: #9bcbe0; }
.g.head > * { border-color: transparent; padding-top: 8px; }
.g:last-child { border: 0; }
.check { display: block; width: 13px; height: 13px; border: 1px solid #888; background: #e6e8ec; box-shadow: inset 0 0 0 1px #fff; }
.check svg { width: 11px; height: 11px; fill: none; stroke: #3d5296; stroke-width: 1.700; }
.alert { margin-left: 204px; width: 558px; height: 85px; display: flex; background: #d9edf7; border-left: 2px solid #81cfe6; border-radius: 3px; color: #31708f; padding: 6px 0 0 6px; }
.alert svg { width: 25px; height: 25px; color: #81cfe6; margin-right: 9px; }
.alert h4 { font-size: 11.500px; line-height: 14px; margin: 6px 0 5px; white-space: nowrap; transform: scaleX(.815); transform-origin: left; }
footer { height: 60px; border-top: 1px solid #ececec; background: #fcfdfe; padding: 8px 12px; display: flex; justify-content: space-between; }
.big { height: 42px; border: 1px solid #ccc; border-bottom: 3px solid #ddd; border-radius: 3px; background: #fff; display: flex; flex-direction: column; align-items: center; justify-content: flex-end; gap: 2px; color: #444; }
.big svg { width: 17px; height: 17px; }
.cancel { width: 51px; }
.cancel svg { width: 14px; height: 15px; }
.save { width: 37px; }
```
